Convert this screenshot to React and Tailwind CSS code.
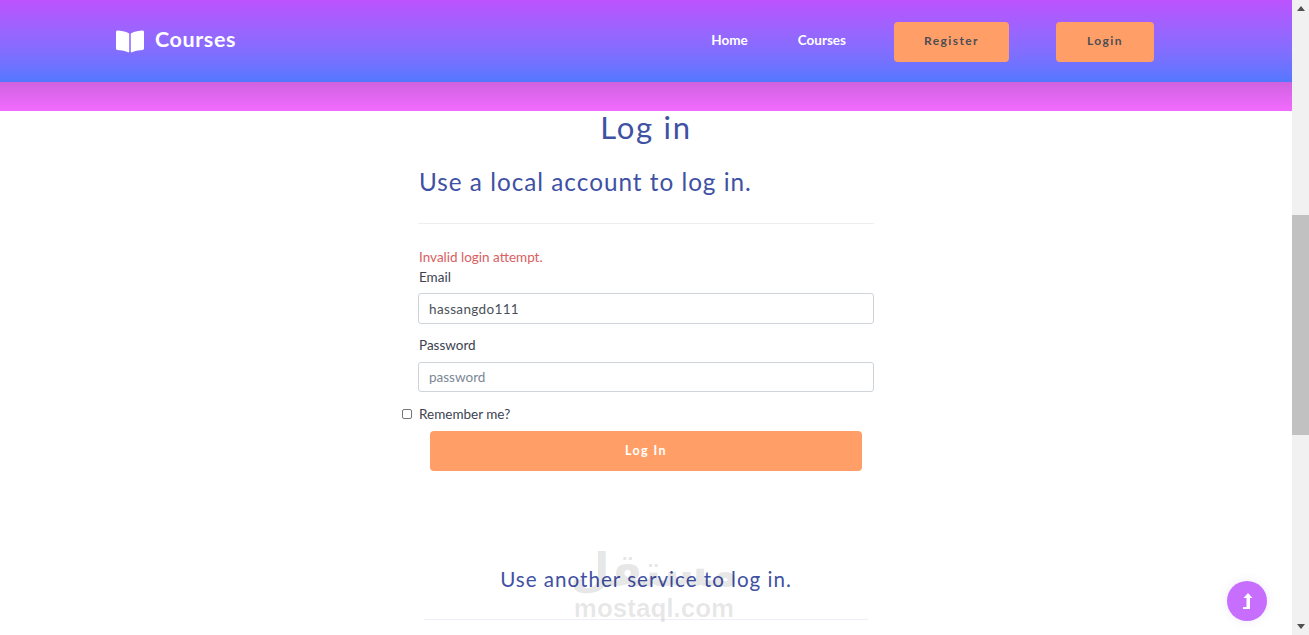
const bodyFont = "font-['Lato','Noto_Sans',sans-serif]";

const BookIcon = () => (
  <svg viewBox="0 0 576 512" className="w-[28px] h-[25px]" fill="#fff">
    <path d="M542.2 32c-54.8 3.1-163.7 14.4-231 55.6-4.6 2.8-7.3 7.9-7.3 13.2v364.4c0 11.6 12.6 18.9 23.3 13.5 69.2-34.8 169.2-44.3 218.7-46.9 16.9-.9 30-14.4 30-30.7V62.800c.1-17.800-15.300-31.800-33.700-30.800zM264.700 87.600C197.500 46.400 88.600 35.100 33.800 32 15.400 31 0 45 0 62.800V400.600c0 16.300 13.100 29.800 30 30.700 49.500 2.600 149.600 12.100 218.800 47 10.700 5.400 23.200-1.900 23.200-13.400V100.600c0-5.300-2.600-10.200-7.300-13z" />
  </svg>
);

const Header = () => (
  <header className="h-[82px] shrink-0 bg-gradient-to-b from-[#bb52ff] to-[#5278ff] flex items-center pl-[116px]">
    <BookIcon />
    <span className="ml-[11px] mb-[3px] text-[21.5px] font-bold text-white tracking-[0.6px] font-['Lato',sans-serif]">Courses</span>
    <nav className="ml-auto mr-[138px] mt-[2px] flex items-center text-white">
      <a className="mb-[4px] text-[13.5px] font-bold">Home</a>
      <a className="ml-[50px] mb-[4px] text-[13.5px] font-bold">Courses</a>
      <button className="ml-[48px] w-[115px] h-[40px] pb-[2px] rounded-[4px] bg-[#ff9f67] text-[#4d4d55] text-[12px] font-bold tracking-[1.4px]">Register</button>
      <button className="ml-[47px] w-[98px] h-[40px] pb-[2px] rounded-[4px] bg-[#ff9f67] text-[#4d4d55] text-[12px] font-bold tracking-[1.4px]">Login</button>
    </nav>
  </header>
);

const Field = ({ label, children, className }) => (
  <div className={className}>
    <label className="block pl-px text-[13.5px] leading-[20px] text-[#3c4250]">{label}</label>
    {children}
  </div>
);

const LoginForm = () => (
  <section className="w-[456px] mx-auto">
    <h2 className="h-[76px] pt-[17px] pl-px text-[24.3px] leading-[36px] text-[#3f51a3] tracking-[1px] font-['Lato',sans-serif]">Use a local account to log in.</h2>
    <hr className="border-[#eeeef2]" />
    <p className="mt-[23px] pl-px text-[13.5px] leading-[20px] text-[#d9605f]">Invalid login attempt.</p>
    <Field label="Email">
      <input
        readOnly
        value="hassangdo111"
        className="mt-[6px] block w-[456px] h-[31px] rounded-[3px] border border-[#ced4da] px-[10px] text-[13.5px] tracking-[0.35px] text-[#495057] outline-none"
      />
    </Field>
    <Field label="Password" className="mt-[11px]">
      <input
        readOnly
        placeholder="password"
        className="mt-[7px] block w-[456px] h-[30px] rounded-[3px] border border-[#ced4da] px-[10px] text-[13.5px] text-[#495057] placeholder:text-[#7b8794] outline-none"
      />
    </Field>
    <div className="mt-[12px] -ml-[16px] flex items-center">
      <input type="checkbox" className="w-[10px] h-[10px] m-0 appearance-none rounded-[2px] border border-[#767676] bg-white" />
      <label className="ml-[7px] text-[13.5px] leading-[20px] text-[#3c4250]">Remember me?</label>
    </div>
    <button className="mt-[7px] mx-auto block w-[432px] h-[40px] rounded-[4px] bg-[#ff9f67] text-white text-[12.5px] font-bold tracking-[1.4px]">Log In</button>
  </section>
);

const Scrollbar = () => (
  <aside className="w-[17px] shrink-0 bg-[#f1f1f1] flex flex-col items-center">
    <svg viewBox="0 0 8 5" className="w-[8px] h-[5px] mt-[6px]" fill="#505050"><path d="M4 0 8 5H0z" /></svg>
    <div className="w-full h-[220px] mt-[204px] bg-[#c1c1c1]" />
    <svg viewBox="0 0 8 5" className="w-[8px] h-[5px] mt-auto mb-[6px]" fill="#505050"><path d="M0 0h8L4 5z" /></svg>
  </aside>
);

export default function App() {
  return (
    <div className={`relative h-[635px] w-full flex overflow-hidden bg-white ${bodyFont}`}>
      <main className="flex-1 min-w-0 flex flex-col overflow-hidden">
        <Header />
        <div className="h-[29px] shrink-0 bg-gradient-to-b from-[#cf62e0] to-[#f26bff]" />
        <h1 className="h-[36px] text-center text-[31px] leading-[32px] text-[#3f51a3] tracking-[1.7px] font-['Lato',sans-serif]">Log in</h1>
        <LoginForm />
        <section className="mt-[93px] w-[444px] mx-auto">
          <h2 className="text-center text-[20.6px] leading-[30px] text-[#3f51a3] tracking-[1px] font-['Lato',sans-serif]">Use another service to log in.</h2>
          <hr className="mt-[25px] border-[#eeeef8]" />
        </section>
      </main>
      <Scrollbar />

      {/* watermark */}
      <div className="absolute left-[556px] top-[545px] w-[196px] flex flex-col items-center text-[#000]/10 pointer-events-none">
        <span className="text-[46px] leading-[51px] font-bold font-['DejaVu_Sans',sans-serif]" dir="rtl">مستقل</span>
        <span className="text-[26px] leading-[24px] font-bold font-['Liberation_Sans',sans-serif]">mostaql.com</span>
      </div>

      {/* back to top */}
      <button className="absolute left-[1227px] top-[581px] w-[40px] h-[40px] rounded-full bg-[#c76eff] shadow-[0_0_10px_rgba(120,120,200,0.15)] flex items-center justify-center">
        <svg viewBox="0 0 12 16" className="w-[12px] h-[16px]" fill="#fff"><path d="M7 0l4.500 5H9v11H2v-2h3.500V5H2.500z" /></svg>
      </button>
    </div>
  );
}
